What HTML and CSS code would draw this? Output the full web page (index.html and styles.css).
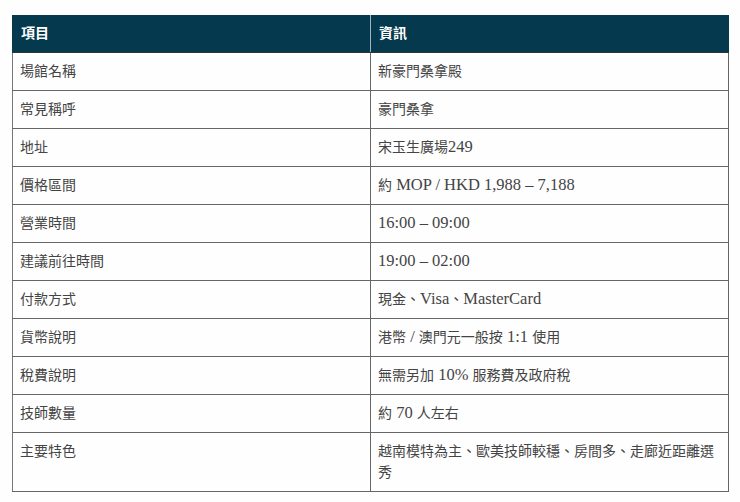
FILE: index.html
```html
<!DOCTYPE html>
<html lang="zh-Hant">
<head>
<meta charset="utf-8">
<link rel="stylesheet" href="styles.css">
</head>
<body>
<div class="wrap">
<table class="info">
<thead>
<tr><th>項目</th><th>資訊</th></tr>
</thead>
<tbody>
<tr><td>場館名稱</td><td>新豪門桑拿殿</td></tr>
<tr><td>常見稱呼</td><td>豪門桑拿</td></tr>
<tr><td>地址</td><td>宋玉生廣場<span class="en" lang="en">249</span></td></tr>
<tr><td>價格區間</td><td>約<span class="en" lang="en"> MOP / HKD 1,988 – 7,188</span></td></tr>
<tr><td>營業時間</td><td><span class="en" lang="en">16:00 – 09:00</span></td></tr>
<tr><td>建議前往時間</td><td><span class="en" lang="en">19:00 – 02:00</span></td></tr>
<tr><td>付款方式</td><td>現金、<span class="en" lang="en">Visa</span>、<span class="en" lang="en">MasterCard</span></td></tr>
<tr><td>貨幣說明</td><td>港幣<span class="en" lang="en"> / </span>澳門元一般按<span class="en" lang="en"> 1:1 </span>使用</td></tr>
<tr><td>稅費說明</td><td>無需另加<span class="en" lang="en"> 10% </span>服務費及政府稅</td></tr>
<tr><td>技師數量</td><td>約<span class="en" lang="en"> 70 </span>人左右</td></tr>
<tr><td>主要特色</td><td>越南模特為主、歐美技師較穩、房間多、走廊近距離選秀</td></tr>
</tbody>
</table>
</div>
</body>
</html>
```
FILE: styles.css
```css
html, body {
  margin: 0;
  padding: 0;
  background: #fefefe;
}
.wrap {
  padding: 15px 11px 0 12px;
}
.info {
  width: 100%;
  border-collapse: collapse;
  table-layout: fixed;
  font-family: "Liberation Serif", "Noto Sans CJK TC", serif;
  font-size: 14px;
  line-height: 21px;
  color: #444;
}
.info .en {
  font-size: 16.5px;
  line-height: 1;
}
.info th {
  background: #053a4e;
  color: #fff;
  font-weight: bold;
  text-align: left;
  padding: 8px 8px;
  border-left: 1px solid #9fb4bf;
  border-bottom: 1px solid #333;
}
.info th:first-child {
  border-left: 1px solid #053a4e;
}
.info th:last-child {
  border-right: 1px solid #053a4e;
}
.info td {
  padding: 8px 8px 8px 7px;
  border: 1px solid #666;
  vertical-align: top;
  text-align: left;
}
.info td:first-child {
  border-left-color: #777;
}
```
